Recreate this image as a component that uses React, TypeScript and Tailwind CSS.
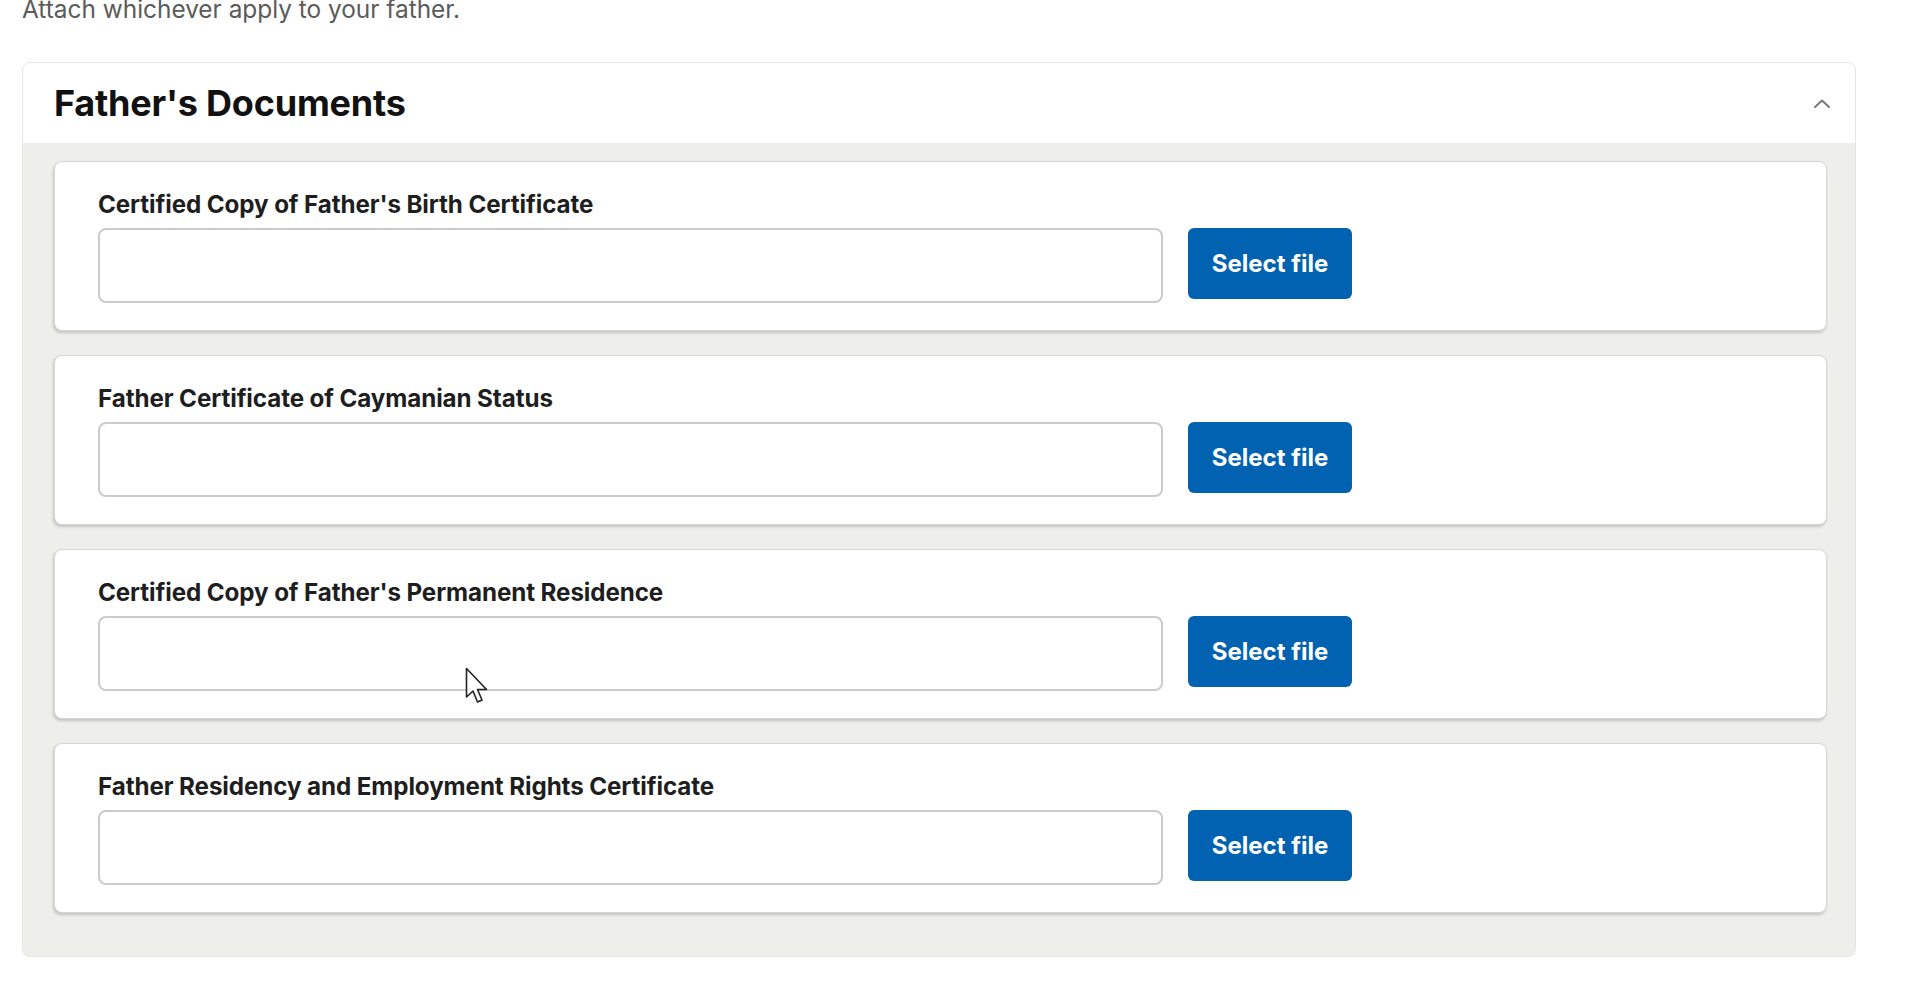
import React from "react";

const documents = [
  "Certified Copy of Father's Birth Certificate",
  "Father Certificate of Caymanian Status",
  "Certified Copy of Father's Permanent Residence",
  "Father Residency and Employment Rights Certificate",
];

function ChevronUp() {
  return (
    <svg width="18" height="11" viewBox="0 0 18 11" fill="none">
      <path d="M2 9 L9 2.5 L16 9" stroke="#7a7a7a" strokeWidth="2" strokeLinecap="round" strokeLinejoin="round" />
    </svg>
  );
}

function Pointer() {
  return (
    <svg width="26" height="40" viewBox="0 0 26 40" className="absolute left-[465px] top-[667px] pointer-events-none">
      <path
        d="M1.5 1.5 L1.5 30 L8 24 L12.5 35 L17 33 L12.5 22.5 L21.5 22.5 Z"
        fill="#ffffff"
        stroke="#222"
        strokeWidth="1.6"
        strokeLinejoin="round"
      />
    </svg>
  );
}

function UploadRow({ label }: { label: string }) {
  return (
    <div className="rounded-lg border border-[#d6d6d6] bg-white pl-[43px] pr-6 pt-[30px] pb-[27px] shadow-[-1px_2px_3px_rgba(0,0,0,0.18)]">
      <label className="block text-[24.2px] leading-[25px] font-bold tracking-[-0.1px] text-[#1e1e1e]">{label}</label>
      <div className="mt-[11px] flex items-start gap-[25px]">
        <input
          type="text"
          readOnly
          className="h-[75px] w-[1065px] rounded-lg border-2 border-[#cbcbcb] bg-white"
        />
        <button className="h-[71px] w-[164px] rounded-md bg-[#0062b0] text-[24px] font-bold text-white">
          Select file
        </button>
      </div>
    </div>
  );
}

export default function App() {
  return (
    <div className="relative min-h-screen overflow-hidden bg-white font-['Inter','Liberation_Sans',sans-serif]">
      <div className="pl-[22px] pr-[64px]">
        <p className="-mt-[5px] text-[24.4px] leading-[28px] text-[#5b5b5b]">Attach whichever apply to your father.</p>
        <section className="mt-[39px] overflow-hidden rounded-lg border border-[#e6e6e6] bg-[#eeeeeb]">
          <header className="flex h-[80px] items-center justify-between bg-white pl-[31px] pr-[24px]">
            <h2 className="text-[36px] font-bold tracking-[-0.2px] text-[#111]">Father's Documents</h2>
            <ChevronUp />
          </header>
          <div className="flex flex-col gap-[24px] pl-[31px] pr-[28px] pt-[18px] pb-[43px]">
            {documents.map((d) => (
              <UploadRow key={d} label={d} />
            ))}
          </div>
        </section>
      </div>
      <Pointer />
    </div>
  );
}
